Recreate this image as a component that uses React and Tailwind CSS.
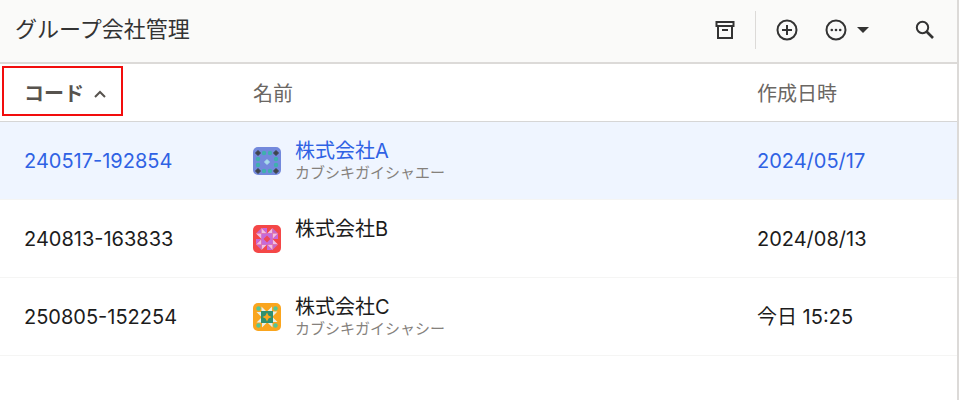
import React from 'react';

const companies = [
  { code: '240517-192854', name: '株式会社A', kana: 'カブシキガイシャエー', created: '2024/05/17', Avatar: AvatarA, selected: true },
  { code: '240813-163833', name: '株式会社B', kana: '', created: '2024/08/13', Avatar: AvatarB },
  { code: '250805-152254', name: '株式会社C', kana: 'カブシキガイシャシー', created: '今日 15:25', Avatar: AvatarC },
];

function AvatarA() {
  return (
    <svg viewBox="0 0 28 28" className="size-7 rounded-[5px]" aria-hidden="true">
      <rect width="28" height="28" fill="#7389dc" />
      {[5, 23].map((x) => [6, 24].map((y) => (
        <path key={`${x}-${y}`} d={`M${x} ${y - 2.5}l2.500 2.500-2.500 2.500-2.500-2.500z`} fill="#3f444c" stroke="#3f444c" strokeLinejoin="round" />
      )))}
      <g fill="#3fb0ae">
        {[11, 17].map((x) => [6, 24].map((y) => <circle key={`${x}-${y}`} cx={x} cy={y} r="2.2" />))}
        {[5, 23].map((x) => [12, 18].map((y) => <circle key={`${x}-${y}`} cx={x} cy={y} r="2.2" />))}
      </g>
      <path d="M14 12.500l2.500 2.500-2.500 2.500-2.500-2.500z" fill="#a9dcec" stroke="#a9dcec" strokeLinejoin="round" />
    </svg>
  );
}

function AvatarB() {
  return (
    <svg viewBox="0 0 28 28" className="size-7 rounded-[5px]" aria-hidden="true">
      <rect width="28" height="28" fill="#f44747" />
      {[0, 90, 180, 270].map((r) => (
        <g key={r} transform={`rotate(${r} 14 14)`}>
          <path d="M3 8.500L8.500 3v5.500z" fill="#c868c8" />
          <path d="M8.500 3L14 8.500H8.500zM19.500 3v5.500H14z" fill="#f0bfe4" />
          <path d="M8.500 3H14v5.500z" fill="#c868d8" />
          <path d="M8.500 8.500h11L14 11.500l-2.500 2.500H8.500z" fill="#c66ad9" />
        </g>
      ))}
      <path d="M14 10.500l3.500 3.500-3.500 3.500-3.500-3.500z" fill="#ef4858" />
    </svg>
  );
}

function AvatarC() {
  return (
    <svg viewBox="0 0 28 28" className="size-7 rounded-[5px]" aria-hidden="true">
      <rect width="28" height="28" fill="#faa51e" />
      {[0, 90, 180, 270].map((r) => (
        <g key={r} transform={`rotate(${r} 14 14)`}>
          <circle cx="5.500" cy="5.500" r="2.200" fill="#55c596" />
          <path d="M8.500 3.500L13.500 8.500H8.500zM19 3.500v5h-5z" fill="#e8efe8" />
        </g>
      ))}
      <rect x="8" y="8" width="12" height="12" fill="#2f9070" />
      <path d="M14 9.500l1.500 3 3 1.500-3 1.500-1.500 3-1.500-3-3-1.500 3-1.500z" fill="#faa51e" />
    </svg>
  );
}

function ArchiveIcon() {
  return (
    <svg viewBox="0 0 20 20" className="size-5" fill="none" stroke="currentColor" strokeWidth="2" aria-hidden="true">
      <path d="M1.500 2h17v4h-17zM3 6v12h14V6M7 10h6" />
    </svg>
  );
}

function AddIcon() {
  return (
    <svg viewBox="0 0 22 22" className="size-[22px]" fill="none" stroke="currentColor" strokeWidth="2" aria-hidden="true">
      <circle cx="11" cy="11" r="9.500" />
      <path d="M11 6v10M6 11h10" />
    </svg>
  );
}

function MoreIcon() {
  return (
    <svg viewBox="0 0 22 22" className="size-[22px]" fill="none" stroke="currentColor" strokeWidth="2" aria-hidden="true">
      <circle cx="11" cy="11" r="9.500" />
      <g fill="currentColor" stroke="none">
        <circle cx="6.800" cy="11" r="1.300" />
        <circle cx="11" cy="11" r="1.300" />
        <circle cx="15.200" cy="11" r="1.300" />
      </g>
    </svg>
  );
}

function SearchIcon() {
  return (
    <svg viewBox="0 0 20 20" className="size-5" fill="none" stroke="currentColor" aria-hidden="true">
      <circle cx="7.500" cy="7.500" r="5.700" strokeWidth="2" />
      <path d="M11.500 11.500l6.500 6.500" strokeWidth="2.600" />
    </svg>
  );
}

export default function App() {
  return (
    <main className="min-h-screen border-r-2 border-[#dcdad8] bg-white font-['Inter','Noto_Sans_CJK_JP',sans-serif] text-[#1c1c1c]">
      <header className="flex h-16 items-center justify-between border-b-2 border-[#dcdad8] bg-[#fafaf9] pr-[22px] pl-[15px] text-[#333]">
        <h1 className="pb-1 text-[22px] leading-8">グループ会社管理</h1>
        <div className="flex items-center pb-0.5">
          <button type="button" aria-label="アーカイブ" className="flex"><ArchiveIcon /></button>
          <span className="mx-5 h-[38px] w-px bg-[#dcdad8]" />
          <button type="button" aria-label="追加" className="flex"><AddIcon /></button>
          <button type="button" aria-label="その他" className="ml-[27px] flex items-center gap-2.5">
            <MoreIcon />
            <svg viewBox="0 0 12 6" className="h-1.5 w-3" aria-hidden="true"><path d="M0 0h12L6 6z" fill="currentColor" /></svg>
          </button>
          <button type="button" aria-label="検索" className="ml-[46px] flex"><SearchIcon /></button>
        </div>
      </header>
      <table className="w-full table-fixed border-separate border-spacing-0 text-left text-[20px]">
        <colgroup>
          <col className="w-[253px]" />
          <col />
          <col className="w-[200px]" />
        </colgroup>
        <thead className="leading-7 text-[#6b6763]">
          <tr className="h-[58px]">
            <th scope="col" aria-sort="ascending" className="relative border-b border-[#d6d6d6] pt-0.5 pl-6">
              <span className="pointer-events-none absolute top-0.5 left-0.5 h-[50px] w-[121px] border-2 border-[#f20d0d]" />
              <button type="button" className="flex items-center gap-2.5 font-bold text-[#57534e]">
                コード
                <svg viewBox="0 0 12 8" className="h-2 w-3" fill="none" stroke="currentColor" strokeWidth="2" aria-hidden="true"><path d="M1 7l5-5 5 5" /></svg>
              </button>
            </th>
            <th scope="col" className="border-b border-[#d6d6d6] pt-0.5 font-normal">名前</th>
            <th scope="col" className="border-b border-[#d6d6d6] pt-0.5 font-normal">作成日時</th>
          </tr>
        </thead>
        <tbody className="leading-6">
          {companies.map(({ code, name, kana, created, Avatar, selected }) => (
            <tr key={code} className={selected ? 'h-[78px] bg-[#eff5ff] text-[#2f62e4]' : 'h-[78px]'}>
              <td className="border-b border-[#f5f5f4] pl-6">{code}</td>
              <td className="border-b border-[#f5f5f4]">
                <div className="flex items-center gap-3.5">
                  <Avatar />
                  <div>
                    <div>{name}</div>
                    <div className="h-5 text-[15px] leading-5 text-[#85817c]">{kana}</div>
                  </div>
                </div>
              </td>
              <td className="border-b border-[#f5f5f4]">{created}</td>
            </tr>
          ))}
        </tbody>
      </table>
    </main>
  );
}
